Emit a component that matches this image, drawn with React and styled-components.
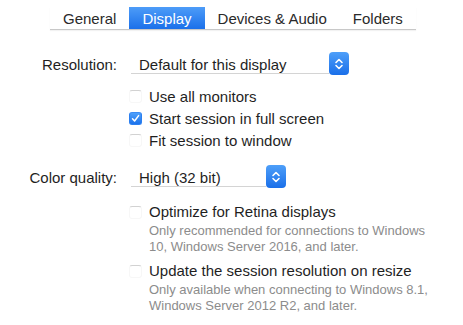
import React from 'react';
import styled, { createGlobalStyle } from 'styled-components';

const GlobalStyle = createGlobalStyle`
  html, body {
    margin: 0;
    padding: 0;
    background: #ffffff;
  }
  body {
    font-family: "Liberation Sans", Arial, sans-serif;
    color: #1f1f1f;
  }
`;

const Page = styled.div`
  width: 463px;
  height: 325px;
  padding-top: 7px;
  box-sizing: border-box;
`;

const TabBar = styled.div`
  display: flex;
  margin-left: 50px;
  width: max-content;
  border-bottom: 1px solid #c8c8c8;
  box-shadow: 0 1px 1px rgba(0, 0, 0, 0.05);
`;

const Tab = styled.div`
  height: 22px;
  padding: 0 13px;
  display: flex;
  align-items: center;
  white-space: nowrap;
  font-size: 15px;
  color: ${(p) => (p.active ? '#ffffff' : '#2a2a2a')};
  background: ${(p) => (p.active ? 'linear-gradient(#4d9cf8, #1b70ea)' : 'transparent')};
`;

const Form = styled.div`
  display: grid;
  grid-template-columns: 117px 1fr;
  column-gap: 14px;
  margin-top: 22px;
`;

const Label = styled.div`
  font-size: 15px;
  text-align: right;
  height: 23px;
  line-height: 25px;
  white-space: nowrap;
`;

const Controls = styled.div`
  display: flex;
  flex-direction: column;
  align-items: flex-start;
`;

const Popup = styled.div`
  width: ${(p) => p.width}px;
  height: 23px;
  display: flex;
  align-items: flex-start;
`;

const PopupField = styled.div`
  flex: 1;
  font-size: 15px;
  padding-left: 8px;
  border-bottom: 1px solid #d4d4d4;
  height: 21px;
  line-height: 25px;
  white-space: nowrap;
`;

const Stepper = styled.div`
  width: 20px;
  height: 23px;
  border-radius: 4px;
  background: linear-gradient(#4e9ff9, #1a6fe9);
  display: flex;
  align-items: center;
  justify-content: center;
`;

const CheckList = styled.div`
  display: flex;
  flex-direction: column;
  margin-top: 10px;
  margin-left: -2px;
`;

const CheckRow = styled.div`
  display: flex;
  align-items: center;
  gap: 7px;
  height: 22px;
  font-size: 15px;
`;

const Box = styled.div`
  width: 13px;
  height: 13px;
  box-sizing: border-box;
  border-radius: 3px;
  flex-shrink: 0;
  display: flex;
  align-items: center;
  justify-content: center;
  background: ${(p) => (p.checked ? 'linear-gradient(#4ea0fa, #1c72eb)' : '#ffffff')};
  border: 1px solid ${(p) => (p.checked ? '#2b7ff0' : '#f7f7f7')};
  border-top-color: ${(p) => (p.checked ? '#3a8cf5' : '#d2d2d2')};
`;

const Spacer = styled.div`
  height: ${(p) => p.h}px;
`;

const Option = styled.div`
  display: flex;
  gap: 7px;
  margin-left: -2px;
  margin-top: ${(p) => p.top}px;
`;

const OptionBox = styled(Box)`
  margin-top: 3px;
`;

const OptionText = styled.div`
  display: flex;
  flex-direction: column;
`;

const OptionTitle = styled.div`
  font-size: 15px;
  line-height: 18px;
`;

const OptionNote = styled.div`
  font-size: 13px;
  line-height: 16px;
  color: #8c8c8c;
  margin-top: 2px;
`;

const Chevrons = () => (
  <svg width="10" height="14" viewBox="0 0 10 14">
    <path d="M2 5.5 L5 2.5 L8 5.5" fill="none" stroke="#fff" strokeWidth="1.6" strokeLinecap="round" strokeLinejoin="round" />
    <path d="M2 8.5 L5 11.5 L8 8.5" fill="none" stroke="#fff" strokeWidth="1.6" strokeLinecap="round" strokeLinejoin="round" />
  </svg>
);

const Check = () => (
  <svg width="9" height="9" viewBox="0 0 9 9">
    <path d="M1.5 4.8 L3.6 7 L7.6 1.6" fill="none" stroke="#fff" strokeWidth="1.5" strokeLinecap="round" strokeLinejoin="round" />
  </svg>
);

const Select = ({ value, width }) => (
  <Popup width={width}>
    <PopupField>{value}</PopupField>
    <Stepper>
      <Chevrons />
    </Stepper>
  </Popup>
);

const tabs = ['General', 'Display', 'Devices & Audio', 'Folders'];

const App = () => (
  <Page>
    <GlobalStyle />
    <TabBar>
      {tabs.map((t) => (
        <Tab key={t} active={t === 'Display'}>{t}</Tab>
      ))}
    </TabBar>
    <Form>
      <Label>Resolution:</Label>
      <Controls>
        <Select value="Default for this display" width={218} />
        <CheckList>
          <CheckRow><Box />Use all monitors</CheckRow>
          <CheckRow><Box checked><Check /></Box>Start session in full screen</CheckRow>
          <CheckRow><Box />Fit session to window</CheckRow>
        </CheckList>
        <Spacer h={14} />
      </Controls>
      <Label>Color quality:</Label>
      <Controls>
        <Select value="High (32 bit)" width={155} />
        <Option top={15}>
          <OptionBox />
          <OptionText>
            <OptionTitle>Optimize for Retina displays</OptionTitle>
            <OptionNote>
              Only recommended for connections to Windows
              <br />
              10, Windows Server 2016, and later.
            </OptionNote>
          </OptionText>
        </Option>
        <Option top={7}>
          <OptionBox />
          <OptionText>
            <OptionTitle>Update the session resolution on resize</OptionTitle>
            <OptionNote>
              Only available when connecting to Windows 8.1,
              <br />
              Windows Server 2012 R2, and later.
            </OptionNote>
          </OptionText>
        </Option>
      </Controls>
    </Form>
  </Page>
);

export default App;
